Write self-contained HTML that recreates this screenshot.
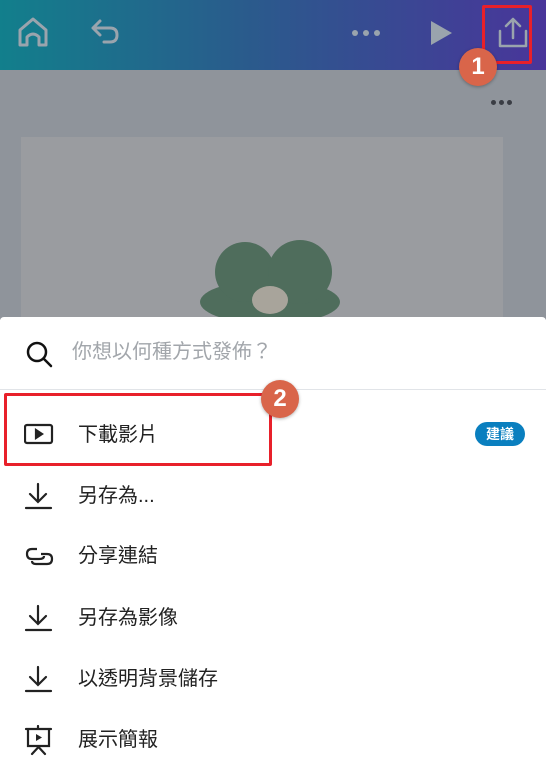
<!DOCTYPE html>
<html><head><meta charset="utf-8"><style>
body{margin:0;width:546px;height:765px;overflow:hidden;position:relative;font-family:"Liberation Sans","Noto Sans CJK TC",sans-serif;background:#fff}
.hdr{position:absolute;left:0;top:0;width:546px;height:70px;background:linear-gradient(90deg,#127f8c,#2a5b8c 45%,#49359a)}
.gray{position:absolute;left:0;top:70px;width:546px;height:250px;background:#8f949b}
.card{position:absolute;left:21px;top:137px;width:482px;height:190px;background:#9a9ca0}
.sheet{position:absolute;left:0;top:317px;width:546px;height:448px;background:#fff;border-radius:4px 4px 0 0}
.t{position:absolute;font-size:20px;color:#222;left:78px;line-height:24px}
.ic{position:absolute;left:24px}
.circ{position:absolute;z-index:5;width:38px;height:38px;border-radius:50%;background:#d9654a;color:#fff;font-weight:bold;font-size:24px;text-align:center;line-height:38px;box-shadow:0 1px 3px rgba(0,0,0,.3)}
</style></head><body>
<div class="hdr"></div>
<svg style="position:absolute;left:0;top:0" width="546" height="70" fill="none" stroke="#9aa4ad" stroke-width="3" stroke-linecap="round" stroke-linejoin="round">
<path d="M20 45V30L33 19L46 30V45H39V37Q33 31 27 37V45Z"/>
<path d="M100 21L93 28L100 35M93 28H110Q117 28 117 35Q117 42 110 42H104"/>
<circle cx="355" cy="33" r="3" fill="#9aa4ad" stroke="none"/><circle cx="366" cy="33" r="3" fill="#9aa4ad" stroke="none"/><circle cx="377" cy="33" r="3" fill="#9aa4ad" stroke="none"/>
<path d="M431 21L452 33L431 45Z" fill="#9aa4ad" stroke="none"/>
<path d="M500 31V46H526V31M513 38V19M506 26L513 19L520 26" stroke-width="2.5"/>
</svg>
<div style="position:absolute;left:482px;top:5px;width:44px;height:53px;border:3px solid #e8202a;border-radius:2px"></div>
<div class="circ" style="left:459px;top:48px">1</div>
<div class="gray"></div>
<div class="card"></div>
<svg style="position:absolute;left:165px;top:232px" width="210" height="90"><g fill="#4f6d5c"><ellipse cx="105" cy="70" rx="70" ry="22"/><ellipse cx="80" cy="40" rx="30" ry="30"/><ellipse cx="135" cy="40" rx="32" ry="32"/></g><ellipse cx="105" cy="68" rx="18" ry="14" fill="#a8a49b"/></svg>
<div class="circ" style="left:261px;top:380px">2</div>
<div class="sheet">
<svg style="position:absolute;left:26px;top:24px" width="30" height="30" fill="none" stroke="#111" stroke-width="2.5"><circle cx="11" cy="11" r="9"/><path d="M18 18L25 25" stroke-linecap="round"/></svg>
<div class="t" style="left:72px;top:23px;color:#a2a6ab">你想以何種方式發佈？</div>
<div style="position:absolute;left:0;top:72px;width:546px;height:1px;background:#e1e4e8"></div>
<div style="position:absolute;left:4px;top:76px;width:262px;height:67px;border:3px solid #e8202a;border-radius:2px"></div>
<svg class="ic" style="top:105px" width="30" height="24" fill="none" stroke="#222" stroke-width="2.2"><rect x="1" y="3" width="27" height="18" rx="2"/><path d="M12 8L18 12L12 16Z" fill="#222"/></svg>
<div class="t" style="top:106px">下載影片</div>
<div style="position:absolute;left:475px;top:105px;width:50px;height:24px;border-radius:12px;background:#0a7fbf;color:#fff;font-size:14px;font-weight:bold;text-align:center;line-height:24px">建議</div>
<svg class="ic" style="top:165px" width="30" height="28" fill="none" stroke="#222" stroke-width="2.2" stroke-linecap="round"><path d="M14 2V19M6 12L14 20L22 12M2 26H27"/></svg>
<div class="t" style="top:167px">另存為...</div>
<svg class="ic" style="top:228px" width="32" height="24" fill="none" stroke="#222" stroke-width="2.2"><path d="M13 4H8Q3 4 3 9Q3 14 8 14H15"/><path d="M17 9H23Q28 9 28 14Q28 19 23 19H12Q8 19 8 16"/><path d="M15 14Q20 14 20 11"/></svg>
<div class="t" style="top:227px">分享連結</div>
<svg class="ic" style="top:287px" width="30" height="28" fill="none" stroke="#222" stroke-width="2.2" stroke-linecap="round"><path d="M14 2V19M6 12L14 20L22 12M2 26H27"/></svg>
<div class="t" style="top:289px">另存為影像</div>
<svg class="ic" style="top:348px" width="30" height="28" fill="none" stroke="#222" stroke-width="2.2" stroke-linecap="round"><path d="M14 2V19M6 12L14 20L22 12M2 26H27"/></svg>
<div class="t" style="top:350px">以透明背景儲存</div>
<svg class="ic" style="top:408px" width="32" height="32" fill="none" stroke="#222" stroke-width="2.2" stroke-linecap="round"><path d="M14 1V4M2 4H27M4 4V21H25V4M8 29L14.5 22L21 29"/><path d="M12 9L18 12.5L12 16Z" fill="#222" stroke="none"/></svg>
<div class="t" style="top:411px">展示簡報</div>
</div>
<div style="position:absolute;left:491px;top:100px;font-size:0">
<span style="display:inline-block;width:5px;height:5px;border-radius:50%;background:#3a3d44;margin-right:3px"></span><span style="display:inline-block;width:5px;height:5px;border-radius:50%;background:#3a3d44;margin-right:3px"></span><span style="display:inline-block;width:5px;height:5px;border-radius:50%;background:#3a3d44"></span></div>
</body></html>
